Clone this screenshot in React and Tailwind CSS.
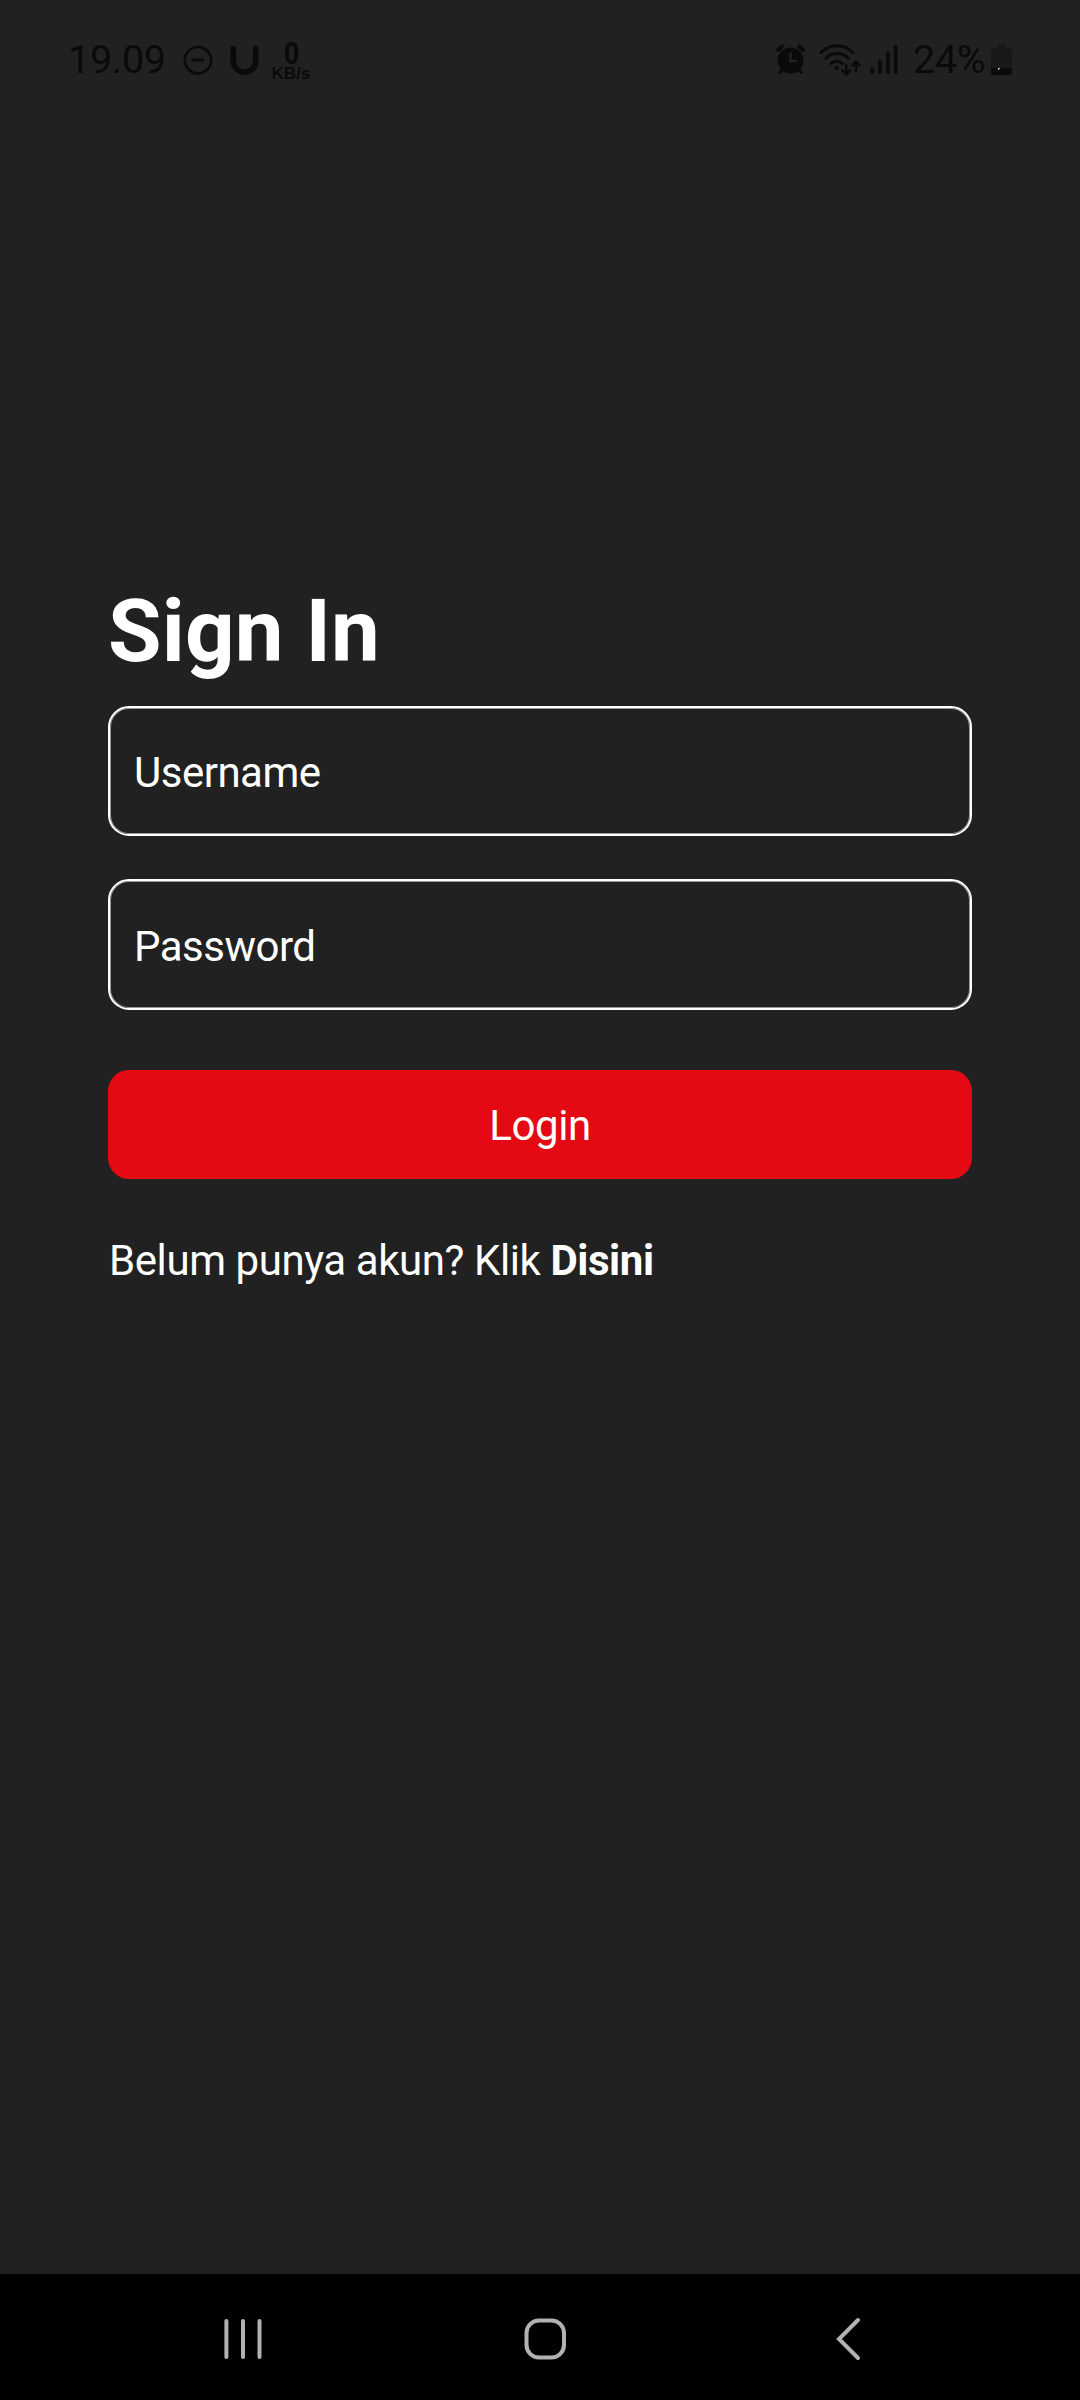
import React from "react";

function StatusBar() {
  return (
    <header className="flex h-[120px] items-start justify-between pl-[68px] pr-[68px] text-[#0a0a0a]">
      <div className="flex pt-[36px]">
        <span className="w-[115px] text-[39.5px] leading-[48px] tracking-[-0.3px] whitespace-nowrap">19.09</span>
        <svg className="mt-[-36px] h-[100px] w-[140px]" viewBox="183 0 140 100" fill="none" stroke="currentColor">
          <circle cx="198" cy="60.200" r="13.200" strokeWidth="2.600" />
          <path d="M191.500 60H204" strokeWidth="2.800" />
          <path d="M233.300 48.500V61a11.200 11.200 0 0 0 22.400 0V48.500" strokeWidth="5.600" strokeLinecap="round" />
          <g fill="currentColor" stroke="none" fontWeight="700" textAnchor="middle">
            <text x="291.500" y="63.500" fontSize="30.500" textLength="15.500" lengthAdjust="spacingAndGlyphs">0</text>
            <text x="291" y="79" fontFamily="Liberation Sans" fontSize="16.500" textLength="39" lengthAdjust="spacingAndGlyphs">KB/s</text>
          </g>
        </svg>
      </div>
      <div className="flex pt-[36px]">
        <svg className="mt-[-36px] h-[100px] w-[141px]" viewBox="771 0 141 100" fill="none" stroke="currentColor" strokeLinecap="round">
          <circle cx="790.500" cy="60.500" r="13" fill="currentColor" stroke="none" />
          <path d="M778 50l4-3.500M803 50l-4-3.500" strokeWidth="4" />
          <path d="M779.500 72.500l3-3M801.500 72.500l-3-3" strokeWidth="3" />
          <path d="M790.500 53.500V61H796" stroke="#222222" strokeWidth="2.500" />
          <path d="M821 52.500a22.500 22.500 0 0 1 32 0M826 58.200a15.500 15.500 0 0 1 22 0M831 63.500a8.500 8.500 0 0 1 11.500 0" strokeWidth="3" />
          <circle cx="836.800" cy="68" r="2.200" fill="currentColor" stroke="none" />
          <path d="M846.200 65V74M842.500 70.500l3.700 3.700 3.700-3.700M856 71V62M852.500 65.300L856 61.700l3.500 3.600" strokeWidth="2.600" />
          <path d="M872.200 69V72.300M880 61.500V72.300M888 53.500V72.300M895.700 46.500V72.300" strokeWidth="3.600" />
        </svg>
        <span className="w-[78px] pl-px text-[39.5px] leading-[48px] tracking-[-0.3px] whitespace-nowrap">24%</span>
        <svg className="mt-[-36px] h-[100px] w-[22px]" viewBox="990 0 22 100">
          <path d="M997 48v-3q0-1.500 1.500-1.500h6q1.500 0 1.500 1.500v3h2.500q3.500 0 3.500 3.500V68h-21V51.500q0-3.500 3.500-3.500z" fill="#191919" />
          <path d="M991 68h21v4q0 3.300-3.500 3.300h-14q-3.500 0-3.500-3.300z" fill="currentColor" />
          <path d="M998 68h2v1h-1v1h-1z" fill="#b8b8b8" />
        </svg>
      </div>
    </header>
  );
}

function Field({ label, type, className }) {
  return (
    <input
      type={type}
      placeholder={label}
      aria-label={label}
      className={
        "w-full rounded-[21px] border-2 border-white bg-transparent pt-[3px] pl-[24px] text-[42px] tracking-[-0.5px] text-white placeholder-white shadow-[inset_0_0_0_1px_rgba(255,255,255,0.55)] outline-none " +
        className
      }
    />
  );
}

function NavBar() {
  return (
    <nav className="flex h-[126px] items-center bg-black pt-[4px] text-[#b2b2b2]">
      <svg className="ml-[222px] h-[44px] w-[44px]" viewBox="222 2317 44 44" stroke="currentColor" strokeWidth="4" strokeLinecap="round">
        <path d="M226.400 2321V2357M243 2321V2357M259.500 2321V2357" />
      </svg>
      <svg className="ml-[256px] h-[44px] w-[46px]" viewBox="522 2317 46 44" fill="none" stroke="currentColor" strokeWidth="4">
        <rect x="526.500" y="2320.500" width="37.500" height="37" rx="12.500" />
      </svg>
      <svg className="ml-[264px] h-[46px] w-[34px]" viewBox="832 2316 34 46" fill="none" stroke="currentColor" strokeWidth="4" strokeLinecap="round">
        <path d="M858 2320L839 2339L858 2358" />
      </svg>
    </nav>
  );
}

export default function App() {
  return (
    <div className="flex h-[2400px] w-[1080px] flex-col overflow-hidden bg-[#212121] font-['Roboto',sans-serif] text-white">
      <StatusBar />
      <main className="mx-[108px] flex flex-1 flex-col pt-[460px]">
        <h1 className="h-[126px] text-[87px] leading-[102px] font-bold tracking-[0.15px]">Sign In</h1>
        <Field label="Username" type="text" className="h-[130px]" />
        <Field label="Password" type="password" className="mt-[43px] h-[131px]" />
        <button className="mt-[60px] h-[109px] w-full rounded-[21px] bg-[#e50914] pt-[2px] text-[42px] tracking-[-0.4px]">Login</button>
        <p className="mt-[57px] pl-px text-[42px] leading-[50px] tracking-[-0.42px] whitespace-nowrap">
          Belum punya akun? Klik <a className="font-bold">Disini</a>
        </p>
      </main>
      <NavBar />
    </div>
  );
}
